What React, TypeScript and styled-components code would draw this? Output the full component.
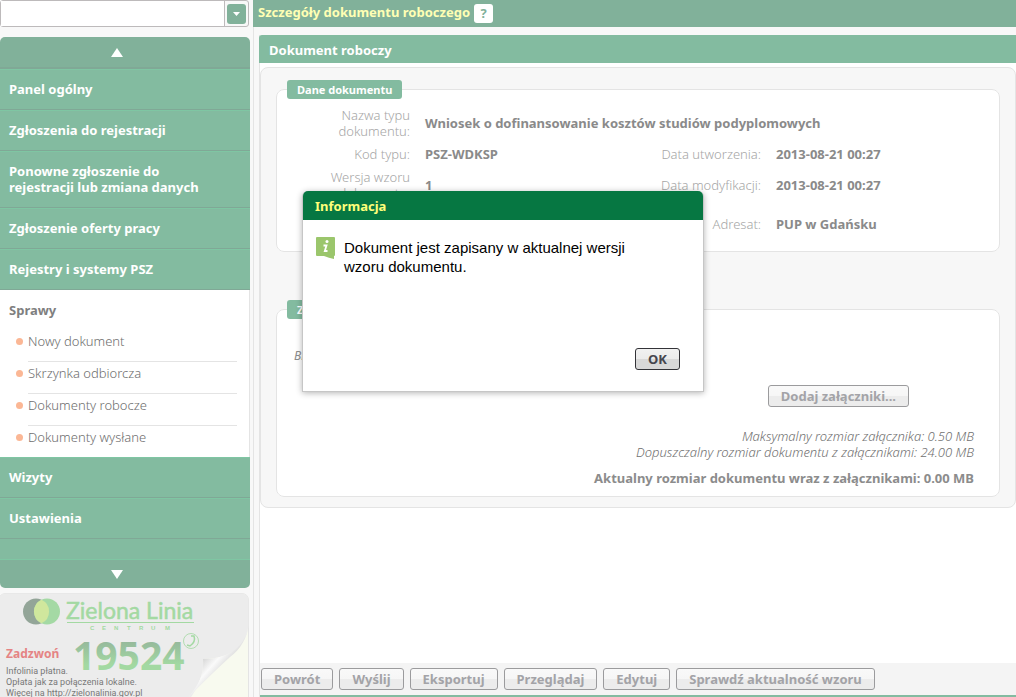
import React from "react";
import styled, { createGlobalStyle, css } from "styled-components";

const green = "#83bba0";
const greenDark = "#81b19a";
const line = "#e4e4e4";

const GlobalStyle = createGlobalStyle`
  * { box-sizing: border-box; }
  body {
    margin: 0;
    background: #f8f8f8;
    font-family: "Noto Sans", "Open Sans", Tahoma, sans-serif;
    font-size: 13px;
    line-height: 16px;
    color: #8c8c8c;
  }
  button, input { font: inherit; }
`;

const Page = styled.div`
  display: flex;
  gap: 3px;
  height: 100vh;
  overflow: hidden;
`;

const Sidebar = styled.aside`
  flex: 0 0 250px;
  min-width: 0;
`;

const SearchBox = styled.form`
  display: flex;
  height: 27px;
  margin: 0 1px 10px 0;
  border: 1px solid #bdbabb;
  border-radius: 3px;
  background: #f8f8f8;
`;

const SearchInput = styled.input`
  flex: 1;
  min-width: 0;
  border: 0;
  border-right: 1px solid #bdbabb;
  background: #fff;
  outline: 0;
`;

const SearchToggle = styled.button`
  display: grid;
  place-items: center;
  width: 19px;
  height: 20px;
  margin: 3px 2px;
  padding: 0;
  border: 0;
  border-radius: 3px;
  background: ${greenDark};
`;

const Menu = styled.nav`
  display: flex;
  flex-direction: column;
  margin-bottom: 5px;
`;

const ScrollButton = styled.button<{ $end?: boolean }>`
  display: flex;
  align-items: center;
  justify-content: center;
  height: ${(p) => (p.$end ? 28 : 32)}px;
  padding: 0 16px 0 0;
  border: 0;
  background: ${greenDark};
  border-radius: ${(p) => (p.$end ? "0 0 5px 5px" : "5px 5px 0 0")};
  ${(p) => !p.$end && css`border-bottom: 2px solid #80a896;`}
`;

const MenuLink = styled.a`
  display: block;
  padding: 11px 40px 12px 9px;
  border-top: 1px solid #7fc6a3;
  border-bottom: 1px solid #80a896;
  background: ${green};
  color: #fff;
  font-weight: 700;
  text-decoration: none;
`;

const MenuFiller = styled.div`
  height: 21px;
  background: ${green};
  border-bottom: 1px solid #7fc6a3;
`;

const OpenSection = styled.section`
  padding: 12px 12px 0 9px;
  background: #fff;
  border-right: 1px solid ${line};
`;

const OpenTitle = styled.h2`
  margin: 0 0 12px;
  font-size: 13px;
  color: #7f7f7f;
`;

const SubList = styled.ul`
  margin: 0;
  padding: 0;
  list-style: none;
`;

const SubItem = styled.li`
  display: flex;
  align-items: flex-start;
  gap: 5px;
  padding-left: 7px;

  &::before {
    content: "";
    width: 7px;
    height: 7px;
    margin-top: 8px;
    border-radius: 50%;
    background: #fbb795;
  }
  &:last-child a { height: 31px; border-bottom: 0; }
`;

const SubLink = styled.a`
  flex: 1;
  height: 32px;
  padding-top: 3px;
  border-bottom: 1px solid ${line};
  color: #6e6e6e;
  font-weight: 300;
  text-decoration: none;
`;

const Banner = styled.a`
  display: block;
`;

const Main = styled.main`
  flex: 1;
  min-width: 0;
  display: flex;
  flex-direction: column;
  border-left: 1px solid ${line};
`;

const PageHeader = styled.header`
  display: flex;
  align-items: center;
  gap: 4px;
  height: 27px;
  margin: 0 0 8px -1px;
  padding: 0 5px 3px;
  background: ${greenDark};
`;

const PageTitle = styled.h1`
  margin: 0;
  font-size: 13px;
  color: #ffffb4;
`;

const HelpButton = styled.button`
  width: 19px;
  height: 19px;
  margin-top: 2px;
  padding: 0;
  border: 0;
  border-radius: 3px;
  background: #fff;
  color: ${greenDark};
  font-weight: 700;
  line-height: 19px;
`;

const Panel = styled.section`
  flex: 1;
  min-height: 0;
  display: flex;
  flex-direction: column;
  margin-left: 5px;
  border-left: 1px solid ${line};
  background: #fff;
`;

const PanelTitle = styled.h2`
  height: 28px;
  margin: 0 0 4px -1px;
  padding: 7px 10px;
  border-radius: 3px 0 0 0;
  background: ${green};
  color: #fff;
  font-size: 13px;
`;

const FormBox = styled.div`
  flex: 1;
  min-height: 0;
`;

const FormCard = styled.div`
  padding: 12px 15px 10px;
  border: 1px solid ${line};
  border-radius: 8px;
  background: #f7f7f7;
`;

const Group = styled.fieldset`
  margin: 0;
  padding: 8px 25px 11px 33px;
  min-width: 0;
  border: 1px solid ${line};
  border-radius: 8px;
  background: #fff;
  & + & { margin-top: 48px; padding-left: 17px; padding-bottom: 10px; }
`;

const GroupTitle = styled.legend<{ $first?: boolean }>`
  margin-left: ${(p) => (p.$first ? -23 : -7)}px;
  padding: 0 10px;
  border-radius: 3px;
  background: ${green};
  color: #fff;
  font-size: 11px;
  font-weight: 700;
  line-height: 19px;
`;

const Details = styled.div`
  display: grid;
  grid-template-columns: 100px 1fr 110px 198px;
  align-items: center;
  gap: 7px 15px;
`;

const Label = styled.span<{ $right?: boolean }>`
  color: #a6a6a6;
  font-weight: 300;
  text-align: right;
  ${(p) => p.$right && css`grid-column: 3; white-space: nowrap;`}
`;

const Value = styled.span<{ $wide?: boolean }>`
  color: #8a8a8a;
  font-weight: 700;
  ${(p) => p.$wide && css`grid-column: 2 / -1;`}
`;

const LastRow = styled.div`
  grid-column: 1 / -1;
  display: grid;
  grid-template-columns: subgrid;
  align-items: center;
  min-height: 32px;
`;

const Attachments = styled.div`
  display: flex;
  flex-direction: column;
`;

const Empty = styled.p`
  margin: 21px 0;
  font-size: 12px;
  font-style: italic;
`;

const Button = styled.button<{ $active?: boolean }>`
  height: 22px;
  padding: 0 12px;
  border: 1px solid ${(p) => (p.$active ? "#333338" : "#9b9b9d")};
  border-radius: 3px;
  background: ${(p) =>
    p.$active
      ? "linear-gradient(#f1f1f1, #ebebeb 50%, #d8d8d8 50%, #d8d8d8)"
      : "linear-gradient(#f9f9f9, #f6f6f6 50%, #ececec 50%, #ececec)"};
  color: ${(p) => (p.$active ? "#46464e" : "#a3a3a7")};
  font-weight: 700;
  line-height: 20px;
  white-space: nowrap;
`;

const AddRow = styled.div`
  display: flex;
  justify-content: flex-end;
  padding-right: 65px;
  margin-bottom: 21px;
`;

const Notes = styled.p`
  margin: 0 0 10px;
  color: #707070;
  font-weight: 300;
  font-style: italic;
  text-align: right;
`;

const Total = styled.p`
  margin: 0;
  font-weight: 700;
  text-align: right;
`;

const Toolbar = styled.footer`
  display: flex;
  gap: 6px;
  padding: 5px 1px;
  border-bottom: 2px solid ${green};
  background: #f4f4f4;
`;

const Dialog = styled.div`
  position: absolute;
  top: 191px;
  left: 302px;
  display: flex;
  flex-direction: column;
  width: 402px;
  height: 201px;
  border: 1px solid #c6c6c6;
  border-top: 0;
  border-radius: 6px 6px 0 0;
  background: #fff;
  box-shadow: 0 1px 6px rgba(0, 0, 0, 0.3);
`;

const DialogTitle = styled.h2`
  margin: 0;
  padding: 7px 12px 6px;
  border-radius: 5px 5px 0 0;
  background: #067742;
  color: #ffff7a;
  font-size: 13px;
`;

const DialogBody = styled.div`
  flex: 1;
  display: flex;
  gap: 8px;
  padding: 17px 60px 0 13px;

  svg { flex: none; }
`;

const Message = styled.p`
  margin: 1px 0 0;
  color: #000;
  font-family: "Liberation Sans", Arial, sans-serif;
  font-size: 15px;
  line-height: 19px;
`;

const DialogActions = styled.div`
  display: flex;
  justify-content: flex-end;
  padding: 0 23px 21px;
`;

const MenuEntry = ({ children }: { children: React.ReactNode }) => (
  <MenuLink href="#">{children}</MenuLink>
);

const Triangle = ({ points, w, h }: { points: string; w: number; h: number }) => (
  <svg width={w} height={h} viewBox={`0 0 ${w} ${h}`}>
    <polygon points={points} fill="#fff" />
  </svg>
);

const HelplineArt = () => (
  <svg width="250" height="110" viewBox="0 0 250 110">
    <defs>
      <linearGradient id="digits" x1="0" y1="0" x2="0" y2="1">
        <stop offset="0.2" stopColor="#94b59b" />
        <stop offset="0.7" stopColor="#a3d9a2" />
      </linearGradient>
      <linearGradient id="curl" gradientUnits="userSpaceOnUse" x1="200" y1="68" x2="218" y2="84">
        <stop offset="0" stopColor="#d4d4d4" />
        <stop offset="0.5" stopColor="#fafafa" />
        <stop offset="1" stopColor="#d8d8d8" />
      </linearGradient>
    </defs>
    <path d="M-1 6Q0 .5 6 .5H241Q248.500 .5 248.500 8V110H-1Z" fill="#f8faef" stroke="#e4e4e4" />
    <path d="M-1 6Q0 .5 6 .5H241Q248.500 .5 248.500 8V32C247 52 231 66 203 66C204 80 200 92 187 110H-1Z" fill="#ececec" />
    <path d="M248.500 32C245 54 229 66 203 66C204 80 200 91 187 106Q204 88 230 64Q246 52 248.500 32Z" fill="url(#curl)" />
    <circle cx="36" cy="18.500" r="13" fill="#93a598" />
    <circle cx="47" cy="18.500" r="13" fill="#a4d9a4" />
    <path d="M41.500 6.700A13 13 0 0 1 41.500 30.300A13 13 0 0 1 41.500 6.700Z" fill="#d0e79d" />
    <text x="66" y="26" fontFamily="Lato, sans-serif" fontSize="23" fill="#a3d9a2" stroke="#a3d9a2" strokeWidth="0.500">Zielona Linia</text>
    <path d="M67 29.500H194" stroke="#a3d9a2" />
    <g fontFamily="Liberation Sans, sans-serif" fontSize="6" fontWeight="700" fill="#a3d9a2">
      <text x="90" y="37">C</text><text x="102" y="37">E</text><text x="114" y="37">N</text>
      <text x="127" y="37">T</text><text x="139" y="37">R</text><text x="151" y="37">U</text><text x="165" y="37">M</text>
    </g>
    <text x="73" y="77" fontFamily="Noto Sans, Open Sans, sans-serif" fontSize="39" fontWeight="700" fill="url(#digits)">19524</text>
    <circle cx="191" cy="48" r="7.500" fill="none" stroke="#b2ddb1" />
    <path d="M191 43L194 43Q196 49 190 53L187 52" fill="none" stroke="#a3d9a2" strokeWidth="1.500" />
    <text x="6" y="65" fontFamily="Noto Sans, sans-serif" fontSize="12" fontWeight="700" fill="#e58484">Zadzwoń</text>
    <g fontFamily="Roboto, sans-serif" fontSize="9" fill="#787878">
      <text x="6" y="81">Infolinia płatna.</text>
      <text x="6" y="92">Opłata jak za połączenia lokalne.</text>
      <text x="6" y="103">Więcej na http://zielonalinia.gov.pl</text>
    </g>
  </svg>
);

const actions = ["Powrót", "Wyślij", "Eksportuj", "Przeglądaj", "Edytuj", "Sprawdź aktualność wzoru"];
const documents = ["Nowy dokument", "Skrzynka odbiorcza", "Dokumenty robocze", "Dokumenty wysłane"];

export default function App() {
  return (
    <>
      <GlobalStyle />
      <Page>
        <Sidebar>
          <SearchBox>
            <SearchInput aria-label="Szukaj" />
            <SearchToggle type="button" aria-label="Rozwiń">
              <Triangle points="0,0 7,0 3.500,4" w={7} h={4} />
            </SearchToggle>
          </SearchBox>
          <Menu>
            <ScrollButton aria-label="Przewiń w górę">
              <Triangle points="0,9 6,0 12,9" w={12} h={9} />
            </ScrollButton>
            <MenuEntry>Panel ogólny</MenuEntry>
            <MenuEntry>Zgłoszenia do rejestracji</MenuEntry>
            <MenuEntry>Ponowne zgłoszenie do rejestracji lub zmiana danych</MenuEntry>
            <MenuEntry>Zgłoszenie oferty pracy</MenuEntry>
            <MenuEntry>Rejestry i systemy PSZ</MenuEntry>
            <OpenSection>
              <OpenTitle>Sprawy</OpenTitle>
              <SubList>
                {documents.map((d) => (
                  <SubItem key={d}><SubLink href="#">{d}</SubLink></SubItem>
                ))}
              </SubList>
            </OpenSection>
            <MenuEntry>Wizyty</MenuEntry>
            <MenuEntry>Ustawienia</MenuEntry>
            <MenuFiller />
            <ScrollButton $end aria-label="Przewiń w dół">
              <Triangle points="0,0 12,0 6,9" w={12} h={9} />
            </ScrollButton>
          </Menu>
          <Banner href="#"><HelplineArt /></Banner>
        </Sidebar>
        <Main>
          <PageHeader>
            <PageTitle>Szczegóły dokumentu roboczego</PageTitle>
            <HelpButton>?</HelpButton>
          </PageHeader>
          <Panel>
            <PanelTitle>Dokument roboczy</PanelTitle>
            <FormBox>
              <FormCard>
                <Group>
                  <GroupTitle $first>Dane dokumentu</GroupTitle>
                  <Details>
                    <Label>Nazwa typu dokumentu:</Label>
                    <Value $wide>Wniosek o dofinansowanie kosztów studiów podyplomowych</Value>
                    <Label>Kod typu:</Label>
                    <Value>PSZ-WDKSP</Value>
                    <Label $right>Data utworzenia:</Label>
                    <Value>2013-08-21 00:27</Value>
                    <Label>Wersja wzoru dokumentu:</Label>
                    <Value>1</Value>
                    <Label $right>Data modyfikacji:</Label>
                    <Value>2013-08-21 00:27</Value>
                    <LastRow>
                      <Label $right>Adresat:</Label>
                      <Value>PUP w Gdańsku</Value>
                    </LastRow>
                  </Details>
                </Group>
                <Group>
                  <GroupTitle>Załączniki</GroupTitle>
                  <Attachments>
                    <Empty>Brak załączników</Empty>
                    <AddRow><Button>Dodaj załączniki...</Button></AddRow>
                    <Notes>
                      Maksymalny rozmiar załącznika: 0.50 MB<br />
                      Dopuszczalny rozmiar dokumentu z załącznikami: 24.00 MB
                    </Notes>
                    <Total>Aktualny rozmiar dokumentu wraz z załącznikami: 0.00 MB</Total>
                  </Attachments>
                </Group>
              </FormCard>
            </FormBox>
            <Toolbar>
              {actions.map((a) => <Button key={a}>{a}</Button>)}
            </Toolbar>
          </Panel>
        </Main>
      </Page>
      <Dialog role="dialog" aria-labelledby="dialog-title">
        <DialogTitle id="dialog-title">Informacja</DialogTitle>
        <DialogBody>
          <svg width="20" height="23" viewBox="0 0 20 23">
            <path d="M1 0H18Q19 0 19 1V18Q19 19 18 19V22Q13 21 8 19H1Q0 19 0 18V1Q0 0 1 0Z" fill="#9bc66c" />
            <circle cx="11" cy="4.500" r="1.500" fill="#fff" />
            <path d="M7.500 8.500H10.500L8.800 14H11.500" fill="none" stroke="#fff" strokeWidth="1.800" />
          </svg>
          <Message>Dokument jest zapisany w aktualnej wersji wzoru dokumentu.</Message>
        </DialogBody>
        <DialogActions>
          <Button $active>OK</Button>
        </DialogActions>
      </Dialog>
    </>
  );
}
